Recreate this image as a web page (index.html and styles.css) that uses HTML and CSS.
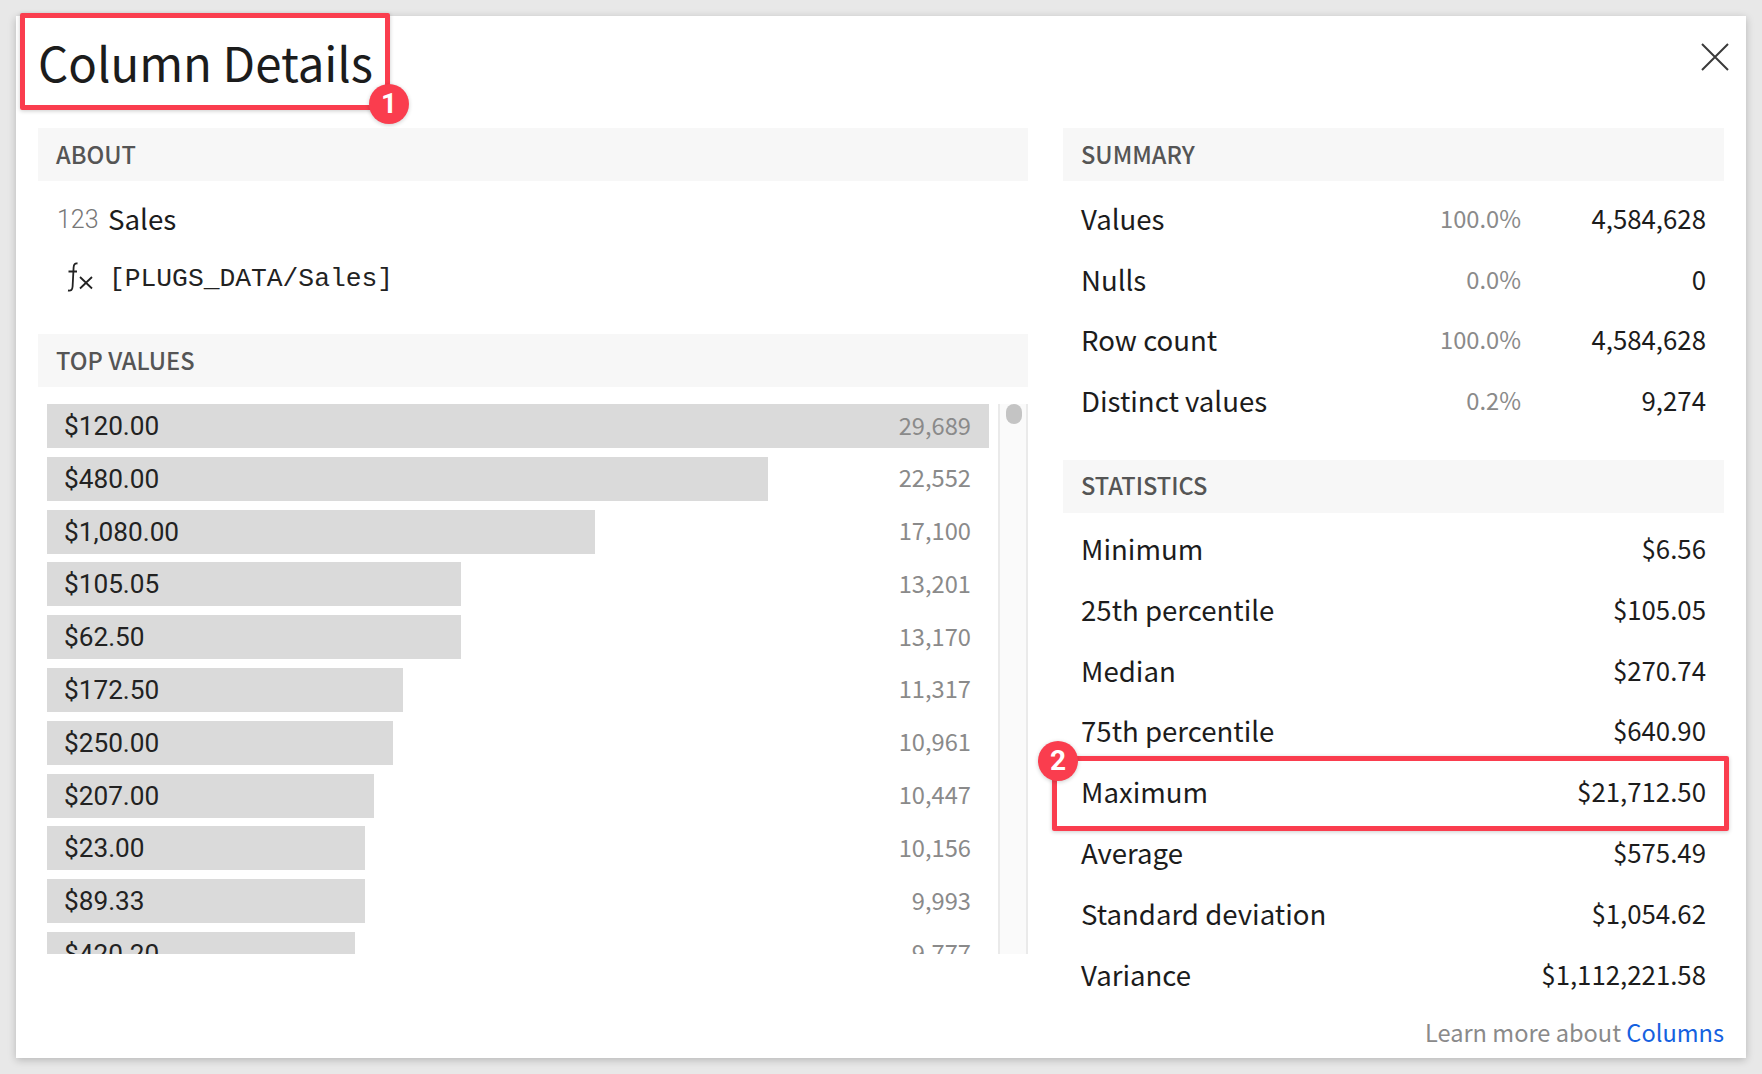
FILE: index.html
```html
<!DOCTYPE html>
<html lang="en">
<head>
<meta charset="utf-8">
<title>Column Details</title>
<link rel="stylesheet" href="styles.css">
</head>
<body>
<div class="modal">
  <header class="modal-head">
    <h1 class="title">Column Details</h1>
    <svg class="close" viewBox="0 0 28 28" width="28" height="28" aria-label="Close"><path d="M1 1L27 27M27 1L1 27"/></svg>
  </header>
  <div class="columns">
    <section class="col">
      <h2 class="sec-head">ABOUT</h2>
      <div class="about">
        <div class="about-row"><span class="type">123</span><span class="name">Sales</span></div>
        <div class="about-row formula-row">
          <svg class="fx" viewBox="0 0 28 32" width="28" height="32"><path class="fx-f" d="M12.5 3.5C10 3 8.8 4.5 8.6 7.5L7.6 26.5C7.4 30 6 31 3 30.5M3.5 11.5H12"/><path class="fx-x" d="M15 17L27 28.5M27 17L15 28.5"/></svg>
          <code class="formula">[PLUGS_DATA/Sales]</code>
        </div>
      </div>
      <h2 class="sec-head">TOP VALUES</h2>
      <div class="top">
        <div class="bars">
          <div class="bar-row"><div class="bar" style="width:100%"></div><span class="bar-label">$120.00</span><span class="bar-count">29,689</span></div>
          <div class="bar-row"><div class="bar" style="width:76.5%"></div><span class="bar-label">$480.00</span><span class="bar-count">22,552</span></div>
          <div class="bar-row"><div class="bar" style="width:58.2%"></div><span class="bar-label">$1,080.00</span><span class="bar-count">17,100</span></div>
          <div class="bar-row"><div class="bar" style="width:44.0%"></div><span class="bar-label">$105.05</span><span class="bar-count">13,201</span></div>
          <div class="bar-row"><div class="bar" style="width:44.0%"></div><span class="bar-label">$62.50</span><span class="bar-count">13,170</span></div>
          <div class="bar-row"><div class="bar" style="width:37.8%"></div><span class="bar-label">$172.50</span><span class="bar-count">11,317</span></div>
          <div class="bar-row"><div class="bar" style="width:36.7%"></div><span class="bar-label">$250.00</span><span class="bar-count">10,961</span></div>
          <div class="bar-row"><div class="bar" style="width:34.7%"></div><span class="bar-label">$207.00</span><span class="bar-count">10,447</span></div>
          <div class="bar-row"><div class="bar" style="width:33.8%"></div><span class="bar-label">$23.00</span><span class="bar-count">10,156</span></div>
          <div class="bar-row"><div class="bar" style="width:33.8%"></div><span class="bar-label">$89.33</span><span class="bar-count">9,993</span></div>
          <div class="bar-row"><div class="bar" style="width:32.7%"></div><span class="bar-label">$420.20</span><span class="bar-count">9,777</span></div>
        </div>
        <div class="track"><div class="thumb"></div></div>
      </div>
    </section>
    <section class="col">
      <h2 class="sec-head">SUMMARY</h2>
      <div class="stats">
        <div class="stat"><span class="stat-label">Values</span><span class="stat-pct">100.0%</span><span class="stat-val">4,584,628</span></div>
        <div class="stat"><span class="stat-label">Nulls</span><span class="stat-pct">0.0%</span><span class="stat-val">0</span></div>
        <div class="stat"><span class="stat-label">Row count</span><span class="stat-pct">100.0%</span><span class="stat-val">4,584,628</span></div>
        <div class="stat"><span class="stat-label">Distinct values</span><span class="stat-pct">0.2%</span><span class="stat-val">9,274</span></div>
      </div>
      <h2 class="sec-head stats-head">STATISTICS</h2>
      <div class="stats stats-lower">
        <div class="stat"><span class="stat-label">Minimum</span><span class="stat-val">$6.56</span></div>
        <div class="stat"><span class="stat-label">25th percentile</span><span class="stat-val">$105.05</span></div>
        <div class="stat"><span class="stat-label">Median</span><span class="stat-val">$270.74</span></div>
        <div class="stat"><span class="stat-label">75th percentile</span><span class="stat-val">$640.90</span></div>
        <div class="stat"><span class="stat-label">Maximum</span><span class="stat-val">$21,712.50</span></div>
        <div class="stat"><span class="stat-label">Average</span><span class="stat-val">$575.49</span></div>
        <div class="stat"><span class="stat-label">Standard deviation</span><span class="stat-val">$1,054.62</span></div>
        <div class="stat"><span class="stat-label">Variance</span><span class="stat-val">$1,112,221.58</span></div>
      </div>
    </section>
  </div>
  <footer class="foot">Learn more about <a class="link" href="#">Columns</a></footer>
  <div class="mark mark-title"></div>
  <div class="badge badge-title">1</div>
  <div class="mark mark-max"></div>
  <div class="badge badge-max">2</div>
</div>
</body>
</html>
```
FILE: styles.css
```css
* { box-sizing: border-box; }
html, body { margin: 0; height: 100%; }
body {
  background: #e8e8e8;
  padding: 16px;
  font-family: "Noto Sans CJK JP", "Noto Sans", sans-serif;
  color: #1c1c1c;
}
.modal {
  position: relative;
  width: 1730px;
  height: 1042px;
  background: #fff;
  box-shadow: 0 2px 8px rgba(0, 0, 0, .22);
  padding: 0 22px;
  display: flex;
  flex-direction: column;
}
.modal-head {
  height: 112px;
  flex: none;
  display: flex;
  justify-content: space-between;
  align-items: flex-start;
}
.title {
  margin: 14px 0 0 0;
  font-size: 47.4px;
  line-height: 64px;
  font-weight: 400;
}
.close {
  margin: 27px -5px 0 0;
  fill: none;
  stroke: #3a3a3a;
  stroke-width: 2;
}
.columns {
  flex: 1;
  display: grid;
  grid-template-columns: 990px 661px;
  column-gap: 35px;
  min-height: 0;
}
.col { min-width: 0; }
.sec-head {
  margin: 0;
  height: 53px;
  background: #f7f7f7;
  padding: 0 0 2px 18px;
  display: flex;
  align-items: center;
  font-size: 23.6px;
  font-weight: 500;
  color: #555;
}
.about { height: 153px; padding: 8px 0 0 18px; }
.about-row { display: flex; align-items: center; height: 58px; }
.type {
  font-family: Roboto, sans-serif;
  font-weight: 300;
  font-size: 25px;
  color: #777;
  width: 52px;
  padding-left: 1px;
  margin-top: 2px;
}
.name { font-size: 27.7px; }
.formula-row { padding-left: 9px; }
.fx { flex: none; margin-right: 16px; fill: none; stroke: #222; }
.fx-f { stroke-width: 1.8; }
.fx-x { stroke-width: 1.8; }
.formula {
  font-family: "Liberation Mono", monospace;
  font-size: 26.3px;
  color: #222;
  white-space: pre;
  margin-top: 5px;
}
.top {
  display: flex;
  height: 567px;
  padding: 17px 0 0 9px;
  overflow: hidden;
}
.bars { width: 942px; flex: none; }
.bar-row {
  position: relative;
  height: 44px;
  margin-bottom: 8.8px;
  padding: 0 18px;
  display: flex;
  align-items: center;
  justify-content: space-between;
}
.bar { position: absolute; left: 0; top: 0; bottom: 0; background: #dadada; }
.bar-label {
  position: relative;
  font-family: Roboto, sans-serif;
  font-size: 26.2px;
  color: #222;
  margin-left: -1px;
}
.bar-count { position: relative; font-size: 23.7px; color: #8a8a8a; margin-bottom: 3px; }
.track {
  width: 30px;
  margin-left: 9px;
  background: #fafafa;
  border-left: 2px solid #eaeaea;
  border-right: 2px solid #eaeaea;
  padding-left: 6px;
}
.thumb { width: 16px; height: 20px; border-radius: 8px; background: #c4c4c4; }
.stats { padding-top: 6.5px; }
.stats-lower { padding-top: 5px; }
.stat {
  height: 60.8px;
  padding: 0 18px;
  display: flex;
  align-items: center;
  font-size: 27.6px;
}
.stat-label { flex: 1; }
.stat-pct { flex: none; font-size: 23.7px; color: #8a8a8a; width: 120px; text-align: right; }
.stat-val { flex: none; font-size: 25.8px; width: 185px; text-align: right; margin-bottom: 1px; }
.stats-head { margin-top: 29px; }
.foot {
  flex: none;
  height: 38px;
  padding-bottom: 14px;
  text-align: right;
  font-size: 23.6px;
  line-height: 24px;
  color: #8a8a8a;
}
.link { color: #1561e0; text-decoration: none; }
.mark {
  position: absolute;
  border: 5px solid #fa3d4e;
  border-radius: 2px;
  box-shadow: 0 1px 4px rgba(0, 0, 0, .2);
}
.mark-title { left: 4px; top: -3px; width: 370px; height: 97px; }
.mark-max { left: 1036px; top: 740px; width: 677px; height: 75px; }
.badge {
  position: absolute;
  width: 40px;
  height: 40px;
  border-radius: 50%;
  background: #fa3d4e;
  color: #fff;
  font-family: Roboto, sans-serif;
  font-weight: 700;
  font-size: 28px;
  line-height: 40px;
  text-align: center;
  box-shadow: 0 1px 4px rgba(0, 0, 0, .2);
}
.badge-title { left: 353px; top: 68px; }
.badge-max { left: 1022px; top: 725px; }
```
